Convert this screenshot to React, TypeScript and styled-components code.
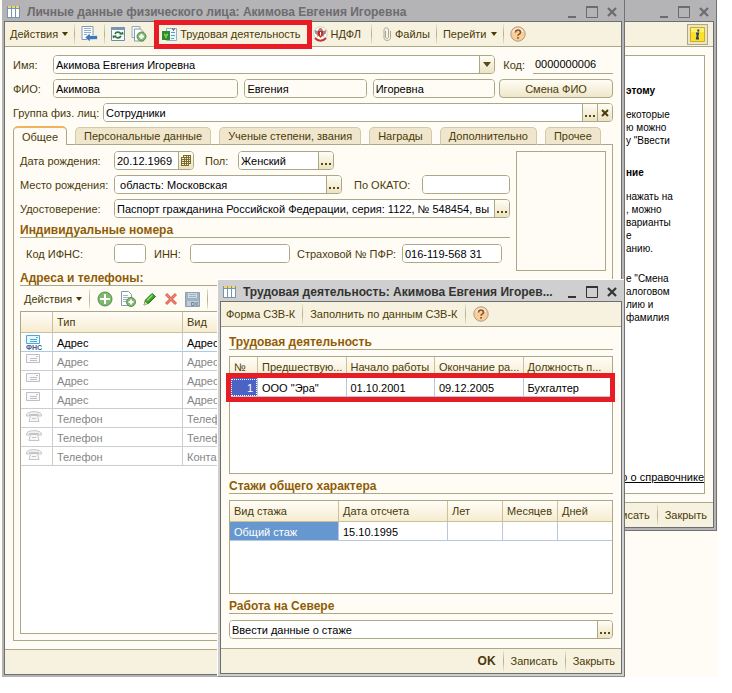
import React from 'react';
import styled, { createGlobalStyle, css } from 'styled-components';

const LINE = '#aba885';
const PAPER = '#fffcf6';
const BAR = '#f7f2df';
const INK = '#4a3a08';
const RED = '#e81c24';

const GlobalStyle = createGlobalStyle`
  * { box-sizing: border-box; }
  body { margin: 0; background: #fff; color: ${INK}; font: 11px/14px "Liberation Sans", Arial, sans-serif; }
  button, input { font: inherit; color: inherit; margin: 0; }
  svg { display: block; flex: none; }
`;

const Desktop = styled.main`
  min-height: 100vh;
  padding: 0 14px 16px 0;
  overflow: hidden;
`;

const Backdrop = styled.div`
  position: relative;
  min-height: calc(100vh - 16px);
  display: flex;
  background: ${PAPER};
`;

const WindowBox = styled.section<{ $tone: string }>`
  display: flex;
  flex-direction: column;
  background: ${p => p.$tone};
  padding: 0 2px 2px;
  border-right: 1px solid #727274;
`;

const MainWindow = styled(WindowBox)`
  flex: 1;
  min-width: 0;
  margin: 0 93px 0 2px;
  position: relative;
`;

const HelpWindow = styled(WindowBox)`
  position: absolute;
  top: 0;
  right: 1px;
  bottom: 146px;
  width: 140px;
  border-bottom: 1px solid #727274;
`;

const DialogWindow = styled(WindowBox)`
  position: absolute;
  top: 280px;
  left: 218px;
  right: 93px;
  min-height: calc(100vh - 296px);
  border-bottom: 1px solid #8c8c8e;
  box-shadow: -1px -1px 0 #fff;
`;

const TitleBar = styled.header<{ $active?: boolean }>`
  display: flex;
  align-items: center;
  justify-content: flex-end;
  height: 21px;
  padding: 2px 4px 0 3px;
  gap: 7px;
  color: ${p => (p.$active ? '#333' : '#6c6c6e')};
`;

const Title = styled.h1`
  flex: 1;
  min-width: 0;
  margin: 0;
  font-size: 12px;
  line-height: 16px;
  font-weight: bold;
  white-space: nowrap;
  overflow: hidden;
  text-overflow: ellipsis;
`;

const WindowButtons = styled.div`
  display: flex;
  gap: 8px;
`;

const PlainButton = styled.button`
  display: flex;
  align-items: center;
  gap: 4px;
  padding: 0;
  border: 0;
  background: none;
  white-space: nowrap;
`;

const Frame = styled.div`
  flex: 1;
  display: flex;
  flex-direction: column;
  border: 1px solid #6e6e6e;
  background: ${PAPER};
`;

const Toolbar = styled.div<{ $end?: boolean; $gap?: number }>`
  display: flex;
  align-items: center;
  height: 25px;
  padding: 0 5px;
  gap: ${p => p.$gap ?? 6}px;
  justify-content: ${p => (p.$end ? 'flex-end' : 'flex-start')};
  background: ${BAR};
  border-bottom: 1px solid ${LINE};
`;

const FooterBar = styled.footer`
  display: flex;
  align-items: center;
  justify-content: flex-end;
  height: 25px;
  gap: 7px;
  padding: 0 6px;
  background: ${BAR};
  border-top: 1px solid ${LINE};
`;

const Separator = styled.span`
  flex: none;
  width: 1px;
  height: 20px;
  background: linear-gradient(#e9e4cf, #b3ad8b 50%, #e9e4cf);
`;

const MarkedButton = styled(PlainButton)`
  position: relative;
  gap: 3px;
  margin: 0 6px 0 9px;
  &::after {
    content: '';
    position: absolute;
    inset: -7px -11px -7px -8px;
    border: 5px solid ${RED};
  }
`;

const TaxButton = styled(PlainButton)`
  gap: 3px;
  padding-right: 4px;
`;

const FilesButton = styled(PlainButton)`
  padding-left: 5px;
`;

const Body = styled.div`
  flex: 1;
  display: flex;
  flex-direction: column;
  padding: 8px;
`;

const Stack = styled.div`
  display: flex;
  flex-direction: column;
  gap: 5px;
`;

const Row = styled.div<{ $gap?: number; $indent?: number; $fill?: boolean }>`
  display: flex;
  align-items: center;
  gap: ${p => p.$gap ?? 0}px;
  padding-left: ${p => p.$indent ?? 0}px;
  min-width: 0;
  ${p => p.$fill && css`flex: 1;`}
`;

const Label = styled.label<{ $w?: number }>`
  flex: none;
  width: ${p => (p.$w ? `${p.$w}px` : 'auto')};
  white-space: nowrap;
`;

const FieldBox = styled.span<{ $w?: number; $grow?: number }>`
  display: flex;
  min-width: 0;
  height: 19px;
  ${p => (p.$w ? css`flex: none; width: ${p.$w}px;` : css`flex: ${p.$grow ?? 1} 1 0;`)}
  border: 1px solid ${LINE};
  border-radius: 4px;
  background: #fff;
  overflow: hidden;
`;

const FieldInput = styled.input<{ $shade?: boolean }>`
  flex: 1;
  width: 0;
  min-width: 0;
  padding: 0 2px;
  border: 0;
  outline: 0;
  color: #000;
  background: ${p => (p.$shade ? PAPER : '#fff')};
`;

const FieldButton = styled.button`
  flex: none;
  display: flex;
  align-items: center;
  justify-content: center;
  width: 15px;
  padding: 0;
  border: 0;
  border-left: 1px solid ${LINE};
  background: linear-gradient(#fffdf4, #ece3c4);
`;

const CodeInput = styled.input`
  width: 80px;
  height: 19px;
  padding: 0 2px;
  border: 0;
  border-bottom: 1px solid ${LINE};
  outline: 0;
  background: transparent;
  color: #000;
`;

const RaisedButton = styled.button`
  flex: none;
  width: 114px;
  height: 19px;
  padding: 0;
  border: 1px solid ${LINE};
  border-radius: 4px;
  background: linear-gradient(#fffdf4, #efe6ca);
`;

const Tabs = styled.div`
  display: flex;
  align-items: flex-end;
  gap: 8px;
  margin: 4px 11px -1px 0;
  height: 19px;
`;

const Tab = styled.button<{ $active?: boolean }>`
  height: ${p => (p.$active ? 19 : 18)}px;
  padding: 0 8px;
  flex: 0 0 auto;
  white-space: nowrap;
  border: 1px solid ${p => (p.$active ? LINE : '#d3c9a8')};
  border-bottom: ${p => (p.$active ? '0' : `1px solid ${LINE}`)};
  border-radius: 5px 5px 0 0;
  background: ${p => (p.$active ? PAPER : '#efe6cd')};
  ${p => p.$active && css`border-top: 2px solid #f0b45c;`}
  z-index: 1;
`;

const Panel = styled.div`
  flex: 1;
  display: flex;
  flex-direction: column;
  padding: 6px;
  border: 1px solid ${LINE};
`;

const Split = styled.div`
  display: flex;
  gap: 6px;
`;

const Grow = styled(Stack)`
  flex: 1;
  min-width: 0;
`;

const Photo = styled.div`
  width: 90px;
  height: 120px;
  border: 1px solid ${LINE};
`;

const Heading = styled.h2`
  margin: 0 0 1px;
  height: 15px;
  font-size: 12px;
  line-height: 14px;
  font-weight: bold;
  color: #8f5c06;
  border-bottom: 1px solid ${LINE};
`;

const DialogHeading = styled(Heading)`
  margin: 0 0 6px;
`;

const SubToolbar = styled.div`
  display: flex;
  align-items: center;
  gap: 7px;
  height: 24px;
  padding: 0 4px;
`;

const TableBox = styled.div<{ $h?: number }>`
  position: relative;
  ${p => (p.$h ? css`height: ${p.$h}px; margin-bottom: 5px;` : css`flex: 1;`)}
  border: 1px solid ${LINE};
  background: #fff;
`;

const Table = styled.table<{ $muted?: boolean }>`
  width: 100%;
  table-layout: fixed;
  border-collapse: separate;
  border-spacing: 0;
  color: ${p => (p.$muted ? '#858585' : '#000')};

  th, td {
    padding: 0 4px;
    text-align: left;
    white-space: nowrap;
    border-right: 1px solid ${p => (p.$muted ? '#c9cfcf' : '#b8c8da')};
    border-bottom: 1px solid ${p => (p.$muted ? '#c9cfcf' : '#b8c8da')};
  }
  th {
    height: 21px;
    font-weight: normal;
    color: ${INK};
    border-color: #c9c09c;
    background: linear-gradient(#fffdf8, #f6ecd0);
  }
  td { height: 19px; padding-top: 2px; }
  th:last-child, td:last-child { border-right: 0; }
`;

const AddressRow = styled.tr<{ $current?: boolean }>`
  ${p => p.$current && css`color: #000; td { border-bottom-color: #a9cbe6; }`}
`;

const RowMarker = styled.div`
  position: absolute;
  top: 16px;
  left: -4px;
  right: -3px;
  height: 29px;
  border: 5px solid ${RED};
`;

const NumberCell = styled.td`
  && {
    text-align: right;
    color: #fff;
    background: #4a63c4;
    outline: 1px dotted #fff;
    outline-offset: -2px;
  }
`;

const SelectedCell = styled.td`
  color: #fff;
  background: #6797cf;
`;

const HelpPage = styled.article`
  flex: 1;
  display: flex;
  flex-direction: column;
  padding: 28px 0 9px 37px;
  border: 1px solid ${LINE};
  background: #fff;
  color: #000;
  font-size: 10px;
  line-height: 13px;
  white-space: nowrap;
`;

const HelpText = styled.p<{ $bold?: boolean; $after: number }>`
  margin: 0 0 ${p => p.$after}px;
  font-weight: ${p => (p.$bold ? 'bold' : 'normal')};
`;

const HelpLink = styled.a`
  margin-top: auto;
  align-self: flex-end;
  font-size: 11px;
  line-height: 14px;
  color: #000;
`;

const InfoButton = styled(PlainButton)`
  justify-content: center;
  width: 21px;
  height: 21px;
  border: 1px solid ${LINE};
  background: #ece5c8;
`;

const Strong = styled.strong`
  font-size: 12px;
`;

const Arrow = () => (
  <svg width="6" height="4" viewBox="0 0 6 4"><path d="M0 0h6L3 4z" fill="#4a3a08" /></svg>
);

const TableIcon = () => (
  <svg width="13" height="12" viewBox="0 0 13 12">
    <path d="M0 0h13v12H0z" fill="#7796ae" />
    <path d="M1 0h3v2H1zM5 0h3v2H5zM9 0h3v2H9z" fill="#f4d768" />
    <path d="M1 3h3v8H1zM5 3h3v8H5zM9 3h3v8H9z" fill="#fff" />
  </svg>
);

const Caption = () => (
  <WindowButtons>
    <PlainButton aria-label="Свернуть"><svg width="12" height="12"><path d="M2 11h8" stroke="currentColor" strokeWidth="2" /></svg></PlainButton>
    <PlainButton aria-label="Развернуть"><svg width="12" height="12"><path d="M.5 1h11v10.500H.5z" fill="none" stroke="currentColor" /><path d="M0 1h12" stroke="currentColor" strokeWidth="2" /></svg></PlainButton>
    <PlainButton aria-label="Закрыть окно"><svg width="12" height="12"><path d="M2 2l8 8M10 2l-8 8" stroke="currentColor" strokeWidth="2.200" /></svg></PlainButton>
  </WindowButtons>
);

const SaveBackIcon = () => (
  <svg width="17" height="16" viewBox="0 0 17 16">
    <path d="M1 .5h11v13H1z" fill="#fff" stroke="#7e9ab4" />
    <path d="M3 2.500h7M3 4.500h7M3 6.500h7M3 8.500h3" stroke="#92acc4" />
    <path d="M4 11.500L9 7v2.500h7.500v4H9V16z" fill="#3f78b8" stroke="#fff" strokeWidth=".6" />
  </svg>
);

const RefreshIcon = () => (
  <svg width="14" height="14" viewBox="0 0 14 14">
    <path d="M.5.500h13v13H.5z" fill="#f7fbfd" stroke="#6d8ca8" />
    <path d="M0 0h14v3H0z" fill="#7896b2" />
    <path d="M4 7c1-2.500 4.500-2.500 6 0M4 9c1 2.500 4.500 2.500 6 0" fill="none" stroke="#2f6f3a" strokeWidth="1.600" />
    <path d="M8 7.500h4.500L12 4.500zM6 8.500H1.500L2 11.500z" fill="#2f6f3a" />
  </svg>
);

const Plus = ({ x, y, r }: { x: number; y: number; r: number }) => (
  <g>
    <circle cx={x} cy={y} r={r} fill="#7fb96c" stroke="#5a8e50" />
    <path d={`M${x - r + 2} ${y}h${2 * r - 4}M${x} ${y - r + 2}v${2 * r - 4}`} stroke="#fff" strokeWidth="2" />
  </g>
);

const CopyIcon = () => (
  <svg width="16" height="16" viewBox="0 0 16 16">
    <path d="M1 .5h8v11H1z" fill="#f5f9fb" stroke="#95aab9" />
    <path d="M3.500 3h6l3 3v9h-9z" fill="#fff" stroke="#829cae" />
    <Plus x={10.5} y={10.5} r={4.5} />
  </svg>
);

const AddCopyIcon = () => (
  <svg width="16" height="16" viewBox="0 0 16 16">
    <path d="M1.500.500h7l3 3v11h-10z" fill="#fff" stroke="#829cae" />
    <path d="M3 4.500h5M3 6.500h6M3 8.500h4M3 10.500h3" stroke="#9bb7cc" />
    <Plus x={11} y={11} r={4.5} />
  </svg>
);

const AddIcon = () => <svg width="16" height="16" viewBox="0 0 16 16"><Plus x={8} y={8} r={7} /></svg>;

const PencilIcon = () => (
  <svg width="14" height="14" viewBox="0 0 14 14">
    <path d="M1 13l1.500-5L9 1.500 12.500 4.500 6 11z" fill="#3da02c" stroke="#23731c" />
    <path d="M4 8.500L9.500 3" stroke="#8fdc76" strokeWidth="1.500" />
    <path d="M1 13l1-3.500L4.500 12z" fill="#f2d9a0" />
  </svg>
);

const DeleteIcon = () => (
  <svg width="14" height="14" viewBox="0 0 14 14">
    <path d="M2 2l10 10M12 2L2 12" stroke="#e0695a" strokeWidth="3" />
    <path d="M2.500 2.500l9 9M11.500 2.500l-9 9" stroke="#f08a72" />
  </svg>
);

const DiskIcon = () => (
  <svg width="15" height="15" viewBox="0 0 15 15">
    <path d="M.5.500h14v14H.5z" fill="#9fb2c2" stroke="#8ba1b3" />
    <path d="M3 1h9v5H3z" fill="#cfdae2" />
    <path d="M4 2.500h7M4 4.500h7" stroke="#9fb2c2" />
    <path d="M2 9h12v5H2z" fill="#c0ccd6" />
    <path d="M6.500 10.500h2.500v3H6.500zM11 10v4M13.500 10l-2 2 2 2" fill="none" stroke="#71899d" />
  </svg>
);

const BookIcon = () => (
  <svg width="15" height="15" viewBox="0 0 15 15">
    <path d="M4.500 1.500h10v12h-10z" fill="#eef5fb" stroke="#8db3d2" />
    <path d="M9 5.500h4M9 8.500h4M9 11.500h3" stroke="#5f9fcb" />
    <path d="M0 4h8v9H0z" fill="#2e8b32" />
    <path d="M2 6l1 1h2l1-1v3H5v2H3V9H2z" fill="#7cc243" />
    <path d="M10.500 1.500l1 2 1-2" fill="none" stroke="#444" />
  </svg>
);

const EagleIcon = () => (
  <svg width="15" height="16" viewBox="0 0 15 16">
    <circle cx="7.500" cy="7.500" r="6.800" fill="#fff" stroke="#d8ccc6" />
    <path d="M1.500 4l3 1 2-3h2l2 3 3-1-1 4-2 1 1 2-2-1-2 2-2-2-2 1 1-2-2-1z" fill="#a0877f" />
    <path d="M5 5h5v4l-2.500 2.500L5 9z" fill="#d22825" />
    <path d="M7.500 6v3.500" stroke="#fff" />
    <path d="M2 12c3 3.500 8 3.500 11 0" fill="none" stroke="#c83434" strokeWidth="2" />
  </svg>
);

const ClipIcon = () => (
  <svg width="8" height="14" viewBox="0 0 8 14">
    <path d="M2.500 4v6c0 2 3 2 3 0V3c0-3-4.500-3-4.500 0v7.500c0 4 6.500 4 6.500 0V4" fill="none" stroke="#a6a698" />
  </svg>
);

const HelpIcon = () => (
  <svg width="16" height="16" viewBox="0 0 16 16">
    <circle cx="8" cy="8" r="7.200" fill="#f8cf9b" stroke="#b39a80" />
    <path d="M2.500 6.500c1-6 10-6 11 0-3-2-8-2-11 0z" fill="#fdeedb" />
    <path d="M5.500 6.500c0-3.300 5-3.300 5 0 0 1.700-2.500 1.500-2.500 3.200M8 11v1.800" fill="none" stroke="#8a5428" strokeWidth="1.600" />
  </svg>
);

const InfoIcon = () => (
  <svg width="15" height="15" viewBox="0 0 15 15">
    <path d="M.5.500h14v14H.5z" fill="#fbe02c" stroke="#d0ad1d" />
    <path d="M1 1h13v4H1z" fill="#fff06a" />
    <path d="M8.500 2.500l-.4 2M6 6.500h2l-1 5h2" fill="none" stroke="#293f63" strokeWidth="2" />
  </svg>
);

const CalendarIcon = () => (
  <svg width="10" height="11" viewBox="0 0 10 11">
    <path d="M2 0h8v9H8v2H0V2h2z" fill="#7b6d30" />
    <path d="M3 1h2v1H3zM6 1h1v1H6zM8 1h1v1H8zM1 3h2v1H1zM4 3h1v1H4zM6 3h1v1H6zM8 3h1v1H8zM1 5h2v1H1zM4 5h1v1H4zM6 5h1v1H6zM8 5h1v1H8zM1 7h2v1H1zM4 7h1v1H4zM6 7h1v1H6zM8 7h1v1H8zM1 9h2v1H1zM4 9h1v1H4zM6 9h1v1H6z" fill="#f3ecc9" />
  </svg>
);

const DotsIcon = () => (
  <svg width="10" height="11" viewBox="0 0 10 11"><path d="M0 8h2v2H0zM4 8h2v2H4zM8 8h2v2H8z" fill="#5b4a12" /></svg>
);

const ClearIcon = () => (
  <svg width="8" height="8" viewBox="0 0 8 8"><path d="M1 1l6 6M7 1L1 7" stroke="#4a3a08" strokeWidth="2" /></svg>
);

const DropIcon = () => <svg width="8" height="5" viewBox="0 0 8 5"><path d="M0 0h8L4 5z" fill="#5b4a12" /></svg>;

const EnvelopeIcon = ({ color, fill }: { color: string; fill: string }) => (
  <svg width="14" height="9" viewBox="0 0 14 9">
    <path d="M.5.500h13v8H.5z" fill={fill} stroke={color} />
    <path d="M4 4.500h7M4 6.500h7M10 2.500h2" stroke={color} />
  </svg>
);

const PhoneIcon = () => (
  <svg width="16" height="11" viewBox="0 0 16 11">
    <path d="M.5 4c0-4.500 15-4.500 15 0v1h-3V3.500h-9V5h-3z" fill="#f1f1f1" stroke="#c4c4c4" />
    <path d="M4.500 4.500h7l1.500 6H3z" fill="#f6f6f6" stroke="#c4c4c4" />
    <path d="M6 7.500h4" stroke="#c4c4c4" />
  </svg>
);

const IconStack = styled.span`
  display: flex;
  flex-direction: column;
  height: 16px;
  padding-left: 1px;
`;

const TaxMark = styled.b`
  font-size: 7px;
  line-height: 7px;
  color: #3f5f8c;
`;

const More = () => <FieldButton aria-label="Выбрать"><DotsIcon /></FieldButton>;

type FieldProps = { id: string; value?: string; w?: number; grow?: number; shade?: boolean; label?: string; children?: React.ReactNode };

const Field = ({ id, value = '', w, grow, shade, label, children }: FieldProps) => (
  <FieldBox $w={w} $grow={grow}>
    <FieldInput id={id} defaultValue={value} $shade={shade} aria-label={label} />
    {children}
  </FieldBox>
);

const addresses = [
  ['Адрес', 'Адрес'],
  ['Адрес', 'Адрес'],
  ['Адрес', 'Адрес'],
  ['Адрес', 'Адрес'],
  ['Телефон', 'Телефон'],
  ['Телефон', 'Телефон'],
  ['Телефон', 'Контактный'],
];

const tabs = ['Общее', 'Персональные данные', 'Ученые степени, звания', 'Награды', 'Дополнительно', 'Прочее'];

const AddressIcon = ({ kind, current }: { kind: string; current: boolean }) => {
  if (current) return <IconStack><EnvelopeIcon color="#4aa9d8" fill="#e9f8ff" /><TaxMark>ФНС</TaxMark></IconStack>;
  if (kind === 'Телефон') return <IconStack><PhoneIcon /></IconStack>;
  return <IconStack><EnvelopeIcon color="#c2bcc4" fill="#faf8fa" /></IconStack>;
};

const Help = () => (
  <HelpWindow $tone="#b4b3b6">
    <TitleBar><Caption /></TitleBar>
    <Frame>
      <Toolbar $end><InfoButton aria-label="Справка"><InfoIcon /></InfoButton></Toolbar>
      <Body>
        <HelpPage>
          <HelpText $bold $after={11}>этому</HelpText>
          <HelpText $after={19}>екоторые<br />ю можно<br />у "Ввести</HelpText>
          <HelpText $bold $after={11}>ние</HelpText>
          <HelpText $after={17}>нажать на<br />, можно<br />варианты<br />е<br />анию.</HelpText>
          <HelpText $after={0}>е "Смена<br />алоговом<br />лию и<br />фамилия</HelpText>
          <HelpLink href="#about">о о справочнике</HelpLink>
        </HelpPage>
      </Body>
      <FooterBar>
        <PlainButton>Записать</PlainButton><Separator /><PlainButton>Закрыть</PlainButton>
      </FooterBar>
    </Frame>
  </HelpWindow>
);

const Person = () => (
  <MainWindow $tone="#b4b3b6">
    <TitleBar><TableIcon /><Title>Личные данные физического лица: Акимова Евгения Игоревна</Title><Caption /></TitleBar>
    <Frame>
      <Toolbar>
        <PlainButton>Действия<Arrow /></PlainButton>
        <Separator />
        <PlainButton aria-label="Записать и закрыть"><SaveBackIcon /></PlainButton>
        <Separator />
        <PlainButton aria-label="Обновить"><RefreshIcon /></PlainButton>
        <PlainButton aria-label="Скопировать"><CopyIcon /></PlainButton>
        <MarkedButton><BookIcon />Трудовая деятельность</MarkedButton>
        <TaxButton><EagleIcon />НДФЛ</TaxButton>
        <Separator />
        <FilesButton><ClipIcon />Файлы</FilesButton>
        <Separator />
        <PlainButton>Перейти<Arrow /></PlainButton>
        <Separator />
        <PlainButton aria-label="Справка"><HelpIcon /></PlainButton>
      </Toolbar>
      <Body>
        <Stack>
          <Row $gap={8}>
            <Label htmlFor="name" $w={32}>Имя:</Label>
            <Field id="name" value="Акимова Евгения Игоревна">
              <FieldButton aria-label="Показать список"><DropIcon /></FieldButton>
            </Field>
            <Label htmlFor="code">Код:</Label>
            <CodeInput id="code" defaultValue="0000000006" />
          </Row>
          <Row $gap={4}>
            <Label htmlFor="last" $w={36}>ФИО:</Label>
            <Row $gap={6} $fill>
              <Field id="last" value="Акимова" grow={186} shade />
              <Field id="first" value="Евгения" grow={122} shade label="Имя" />
              <Field id="middle" value="Игоревна" grow={122} shade label="Отчество" />
            </Row>
            <RaisedButton>Смена ФИО</RaisedButton>
          </Row>
          <Row>
            <Label htmlFor="group" $w={90}>Группа физ. лиц:</Label>
            <Field id="group" value="Сотрудники">
              <More />
              <FieldButton aria-label="Очистить"><ClearIcon /></FieldButton>
            </Field>
          </Row>
        </Stack>
        <Tabs role="tablist">
          {tabs.map((t, i) => <Tab key={t} role="tab" aria-selected={i === 0} $active={i === 0}>{t}</Tab>)}
        </Tabs>
        <Panel>
          <Split>
            <Grow>
              <Row>
                <Label htmlFor="born" $w={94}>Дата рождения:</Label>
                <Field id="born" value="20.12.1969" w={80}>
                  <FieldButton aria-label="Календарь"><CalendarIcon /></FieldButton>
                </Field>
                <Row $indent={11}>
                  <Label htmlFor="sex" $w={33}>Пол:</Label>
                  <Field id="sex" value="Женский" w={96}><More /></Field>
                </Row>
              </Row>
              <Row>
                <Label htmlFor="place" $w={94}>Место рождения:</Label>
                <Field id="place" value=" область: Московская"><More /></Field>
                <Row $indent={12}>
                  <Label htmlFor="okato" $w={68}>По ОКАТО:</Label>
                  <Field id="okato" w={88} />
                </Row>
              </Row>
              <Row>
                <Label htmlFor="doc" $w={94}>Удостоверение:</Label>
                <Field id="doc" value="Паспорт гражданина Российской Федерации, серия: 1122, № 548454, вы"><More /></Field>
              </Row>
              <Heading>Индивидуальные номера</Heading>
              <Row $indent={6}>
                <Label htmlFor="ifns" $w={88}>Код ИФНС:</Label>
                <Field id="ifns" w={32} />
                <Row $indent={8}>
                  <Label htmlFor="inn" $w={36}>ИНН:</Label>
                  <Field id="inn" w={100} />
                </Row>
                <Row $indent={7}>
                  <Label htmlFor="pfr" $w={105}>Страховой № ПФР:</Label>
                  <Field id="pfr" value="016-119-568 31" w={100} />
                </Row>
              </Row>
            </Grow>
            <Photo />
          </Split>
          <Heading>Адреса и телефоны:</Heading>
          <SubToolbar>
            <PlainButton>Действия<Arrow /></PlainButton>
            <Separator />
            <PlainButton aria-label="Добавить"><AddIcon /></PlainButton>
            <PlainButton aria-label="Добавить копированием"><AddCopyIcon /></PlainButton>
            <PlainButton aria-label="Изменить"><PencilIcon /></PlainButton>
            <PlainButton aria-label="Удалить"><DeleteIcon /></PlainButton>
            <PlainButton aria-label="Сохранить"><DiskIcon /></PlainButton>
            <Separator />
          </SubToolbar>
          <TableBox>
            <Table $muted>
              <colgroup><col width="32" /><col width="130" /><col /></colgroup>
              <thead><tr><th /><th>Тип</th><th>Вид</th></tr></thead>
              <tbody>
                {addresses.map(([kind, view], i) => (
                  <AddressRow key={i} $current={i === 0}>
                    <td><AddressIcon kind={kind} current={i === 0} /></td>
                    <td>{kind}</td>
                    <td>{view}</td>
                  </AddressRow>
                ))}
              </tbody>
            </Table>
          </TableBox>
        </Panel>
      </Body>
      <FooterBar />
    </Frame>
  </MainWindow>
);

const Experience = () => (
  <DialogWindow $tone="#cfcfcf" role="dialog">
    <TitleBar $active><TableIcon /><Title>Трудовая деятельность: Акимова Евгения Игорев...</Title><Caption /></TitleBar>
    <Frame>
      <Toolbar $gap={7}>
        <PlainButton>Форма СЗВ-К</PlainButton>
        <Separator />
        <PlainButton>Заполнить по данным СЗВ-К</PlainButton>
        <Separator />
        <PlainButton aria-label="Справка"><HelpIcon /></PlainButton>
      </Toolbar>
      <Body>
        <DialogHeading>Трудовая деятельность</DialogHeading>
        <TableBox $h={118}>
          <Table>
            <colgroup><col width="28" /><col /><col /><col /><col /></colgroup>
            <thead>
              <tr><th>№</th><th>Предшествую...</th><th>Начало работы</th><th>Окончание ра...</th><th>Должность п...</th></tr>
            </thead>
            <tbody>
              <tr>
                <NumberCell>1</NumberCell><td>ООО "Эра"</td><td>01.10.2001</td><td>09.12.2005</td><td>Бухгалтер</td>
              </tr>
            </tbody>
          </Table>
          <RowMarker />
        </TableBox>
        <DialogHeading>Стажи общего характера</DialogHeading>
        <TableBox $h={94}>
          <Table>
            <colgroup><col width="109" /><col width="109" /><col width="55" /><col width="55" /><col /></colgroup>
            <thead>
              <tr><th>Вид стажа</th><th>Дата отсчета</th><th>Лет</th><th>Месяцев</th><th>Дней</th></tr>
            </thead>
            <tbody>
              <tr><SelectedCell>Общий стаж</SelectedCell><td>15.10.1995</td><td /><td /><td /></tr>
            </tbody>
          </Table>
        </TableBox>
        <DialogHeading>Работа на Севере</DialogHeading>
        <Row>
          <Field id="north" value="Ввести данные о стаже" label="Работа на Севере"><More /></Field>
        </Row>
      </Body>
      <FooterBar>
        <PlainButton><Strong>OK</Strong></PlainButton>
        <Separator />
        <PlainButton>Записать</PlainButton>
        <Separator />
        <PlainButton>Закрыть</PlainButton>
      </FooterBar>
    </Frame>
  </DialogWindow>
);

export default function App() {
  return (
    <>
      <GlobalStyle />
      <Desktop>
        <Backdrop>
          <Help />
          <Person />
          <Experience />
        </Backdrop>
      </Desktop>
    </>
  );
}
